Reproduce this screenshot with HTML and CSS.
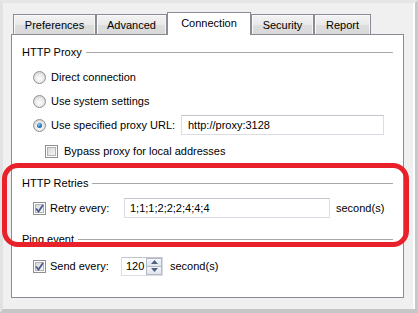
FILE: index.html
```html
<!DOCTYPE html>
<html>
<head>
<meta charset="utf-8">
<link rel="stylesheet" href="styles.css">
</head>
<body>
<div class="window">
  <div class="tabs">
    <div class="tab w-pref">Preferences</div>
    <div class="tab w-adv">Advanced</div>
    <div class="tab tab-active w-conn">Connection</div>
    <div class="tab w-sec">Security</div>
    <div class="tab w-rep">Report</div>
  </div>
  <div class="panel">
    <div class="legend legend-first"><span>HTTP Proxy</span><i></i></div>
    <div class="row row-first"><span class="radio"></span><span class="label">Direct connection</span></div>
    <div class="row"><span class="radio"></span><span class="label">Use system settings</span></div>
    <div class="row"><span class="radio radio-on"></span><span class="label label-url">Use specified proxy URL:</span><span class="textbox tb-url">http://proxy:3128</span></div>
    <div class="row row-sub"><span class="check"></span><span class="label">Bypass proxy for local addresses</span></div>

    <div class="legend legend-retries"><span>HTTP Retries</span><i></i></div>
    <div class="row row-first"><span class="check check-on"><svg width="9" height="9" viewBox="0 0 9 9"><path d="M1 4.5 L3.5 7.5 L8 1" fill="none" stroke="#4a5c8f" stroke-width="1.8"/></svg></span><span class="label label-retry">Retry every:</span><span class="textbox tb-retry">1;1;1;2;2;2;4;4;4</span><span class="unit">second(s)</span></div>

    <div class="legend legend-ping"><span>Ping event</span><i></i></div>
    <div class="row row-send"><span class="check check-on"><svg width="9" height="9" viewBox="0 0 9 9"><path d="M1 4.5 L3.5 7.5 L8 1" fill="none" stroke="#4a5c8f" stroke-width="1.8"/></svg></span><span class="label label-send">Send every:</span>
      <span class="spin"><span class="spin-val">120</span><span class="spin-btns"><span class="spin-btn"><svg width="7" height="4" viewBox="0 0 7 4"><path d="M0 4 L3.5 0 L7 4Z" fill="#4d6185"/></svg></span><span class="spin-btn"><svg width="7" height="4" viewBox="0 0 7 4"><path d="M0 0 L3.5 4 L7 0Z" fill="#4d6185"/></svg></span></span></span>
      <span class="unit unit-send">second(s)</span></div>
  </div>
  <div class="highlight"></div>
</div>
</body>
</html>
```

FILE: styles.css
```css
* { box-sizing: border-box; }
html, body { margin: 0; padding: 0; }
body {
  width: 418px; height: 313px; overflow: hidden;
  font-family: "Liberation Sans", Arial, sans-serif;
  font-size: 11px; color: #000;
  background: #f0f0f0;
}
.window {
  position: relative;
  width: 418px; height: 313px;
  background: #f0f0f0;
  border-top: 3px solid #e6e6e6;
  border-left: 3px solid #e2e2e2;
  border-right: 3px solid #c8c8c8;
  border-bottom: 4px solid #c6c6c6;
  box-shadow: inset -2px 0 0 #fbfdff;
  padding: 10px 0 0 8px;
}
.tabs {
  display: flex;
  align-items: flex-end;
  height: 22px;
  margin-left: 2px;
  margin-bottom: -1px;
  position: relative;
  z-index: 2;
}
.tab {
  height: 20px;
  margin-bottom: 1px;
  border: 1px solid #898c95;
  border-bottom: none;
  background: linear-gradient(#f3f3f3, #e9e9e9 50%, #dedede 51%, #d8d8d8);
  box-shadow: inset 1px 1px 0 #fbfbfb, inset -1px 0 0 #f4f4f4;
  display: flex; align-items: center; justify-content: center;
  padding-top: 1px;
}
.tab-active {
  height: 23px;
  margin-bottom: 0;
  background: #fff;
  box-shadow: none;
  padding-top: 0;
  padding-bottom: 3px;
}
.w-pref { width: 83px; }
.w-adv { width: 71px; }
.w-conn { width: 84px; }
.w-sec { width: 63px; }
.w-rep { width: 57px; }

.panel {
  width: 393px; height: 264px;
  background: #fff;
  border: 1px solid #898c95;
  padding: 0 10px;
  position: relative; z-index: 1;
}
.legend {
  display: flex; align-items: center;
  height: 14px;
}
.legend span { padding-right: 4px; white-space: nowrap; }
.legend i { flex: 1; height: 1px; background: #a8a8a8; }
.legend-first { margin-top: 10px; }
.legend-retries { margin-top: 13px; }
.legend-ping { margin-top: 12px; }

.row {
  display: flex; align-items: center;
  height: 24px;
  padding-left: 11px;
}
.row-first { margin-top: 6px; }
.row-sub { padding-left: 23px; margin-top: 2px; }
.row-send { margin-top: 8px; }

.radio {
  width: 13px; height: 13px; border-radius: 50%;
  border: 1px solid #8e8f8f;
  background: radial-gradient(circle at 50% 60%, #fdfdfd 0, #f0f0f0 35%, #d9d9d9 75%, #cfcfcf 100%);
  flex: none; position: relative;
}
.radio-on::after {
  content: ""; position: absolute;
  left: 3px; top: 3px; width: 5px; height: 5px; border-radius: 50%;
  background: radial-gradient(circle at 40% 35%, #8fd0f5 0, #2a7fc0 45%, #1a4f86 100%);
}
.label { margin-left: 5px; white-space: nowrap; }
.label-url { width: 130px; }
.check {
  width: 13px; height: 13px; flex: none;
  border: 1px solid #8f8f8f;
  background: #fff;
  padding: 1px;
  display: flex; align-items: center; justify-content: center;
  position: relative;
}
.check::before {
  content: ""; position: absolute; left: 1px; top: 1px; right: 1px; bottom: 1px;
  border: 1px solid #b4b4b4;
  background: linear-gradient(135deg, #d9d9d9, #f6f6f6);
}
.check svg { position: relative; }
.row-sub .label { margin-left: 6px; }
.label-retry { width: 74px; margin-left: 4px; }
.label-send { width: 71px; margin-left: 4px; }

.textbox {
  height: 20px;
  border: 1px solid #dadde3;
  border-top-color: #c2c5cb;
  background: #fff;
  display: flex; align-items: center;
  padding-left: 6px;
  white-space: nowrap;
}
.tb-url { width: 203px; }
.tb-retry { width: 206px; padding-left: 5px; }
.unit { margin-left: 6px; }
.spin {
  width: 42px; height: 19px;
  border: 1px solid #dadde3;
  border-top-color: #c2c5cb;
  display: flex; align-items: center;
  padding-left: 4px;
}
.spin-val { flex: 1; }
.spin-btns {
  width: 16px; height: 17px;
  display: flex; flex-direction: column;
}
.spin-btn {
  flex: 1;
  border: 1px solid #b3b9c6;
  background: linear-gradient(#f4f6fa, #dfe4ec);
  display: flex; align-items: center; justify-content: center;
}
.spin-btn + .spin-btn { border-top: none; }
.unit-send { margin-left: 7px; }

.highlight {
  position: absolute;
  left: -1px; top: 160px;
  width: 407px; height: 84px;
  border: 5px solid #e8212a;
  border-radius: 16px;
  z-index: 5;
}
```
